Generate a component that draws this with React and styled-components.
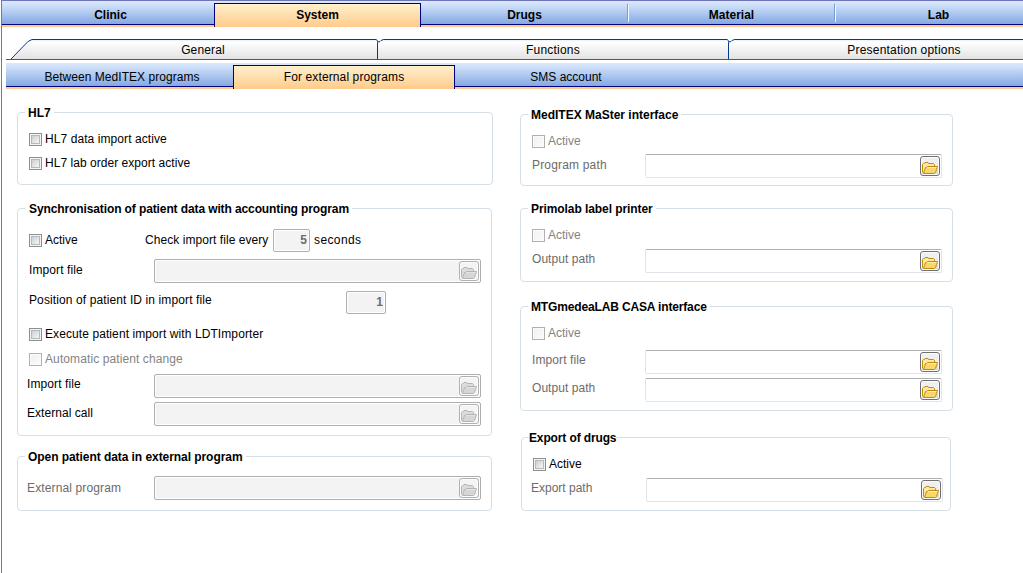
import styled, { createGlobalStyle, css } from 'styled-components';


const FolderIcon = ({disabled}) => {
    const line = disabled ? "#b4b4b4" : "#c08a10";
    const back = disabled ? "#dcdcdc" : "#fdeaa0";
    const front = disabled ? "#d6d6d6" : "#fbd669";

    return (
        <svg width="16" height="12" viewBox="0 0 16 12">
            <path d="M0.5 10.5V2.5L1.5 1.5H2.5L3 0.5H6L6.5 1.5H11.5L12.5 2.5V5" fill={back} stroke={line} />
            <path d="M1.5 11.5H12.5L13.5 10.5L14.5 7.5L15.5 4.5H5.5L4.5 5.5H3.5L2.5 8.5Z" fill={front} stroke={line} />
            <path d="M5 5.5H14.5" stroke={disabled ? "#e4e4e4" : "#fff0a8"} />
        </svg>
    );
};

const PathField = ({width, disabled}) => {
    return (
        <Field $width={width} $disabled={disabled}>
            <FolderButton $disabled={disabled}><FolderIcon disabled={disabled}/></FolderButton>
        </Field>
    );
};

const Check = ({label, disabled, spacing}) => {
    return (
        <CheckLabel $disabled={disabled}>
            <Box $disabled={disabled}/>
            <Text $spacing={spacing}>{label}</Text>
        </CheckLabel>
    );
};

const PageTabs = () => {
    return (
        <PageBar>
            <Slope width="26" height="21" viewBox="0 0 26 21">
                <defs>
                    <linearGradient id="slope" x1="0" y1="0" x2="0" y2="1">
                        <stop offset="0" stopColor="#ffffff"/>
                        <stop offset="1" stopColor="#e3e3e3"/>
                    </linearGradient>
                </defs>
                <path d="M5 20L22 2L26 1V20Z" fill="url(#slope)"/>
                <path d="M5 20L22 2.5L24 1.5L26 0.5" fill="none" stroke="#003c8c"/>
            </Slope>
            <PageTab $first>
                <Text $spacing={0.15}>General</Text>
            </PageTab>
            <PageTab>
                <Notch/>
                <Text $spacing={0.2}>Functions</Text>
            </PageTab>
            <PageTab>
                <Notch/>
                <Text $spacing={0.2}>Presentation options</Text>
            </PageTab>
        </PageBar>
    );
};

const Notch = () => {
    return (
        <Corner width="8" height="4" viewBox="0 0 8 4">
            <path d="M0 0H8L2 4Z" fill="#ffffff"/>
            <path d="M0.5 0.5L2 3L4 2.5L5 1.5L7.5 0.5" fill="none" stroke="#003c8c"/>
        </Corner>
    );
};

const App = () => {
    return (
        <Window>
            <GlobalStyle/>
            <TabBar $bold>
                <Tab $width={207}>Clinic</Tab>
                <Tab $width={207} $active>System</Tab>
                <Tab $width={207} $divider>Drugs</Tab>
                <Tab $width={207} $divider>Material</Tab>
                <Tab $width={207}>Lab</Tab>
            </TabBar>
            <PageTabs/>
            <TabBar $sub>
                <Tab $width={222}><Text $spacing={0.04}>Between MedITEX programs</Text></Tab>
                <Tab $width={222} $active><Text $spacing={0.12}>For external programs</Text></Tab>
                <Tab $width={222}>SMS account</Tab>
            </TabBar>

            <Columns>
                <Column $top={16} $width={476}>
                    <Group $height={80}>
                        <Legend>HL7</Legend>
                        <Row $top={13}><Check label="HL7 data import active" spacing={0.08}/></Row>
                        <Row $top={11}><Check label="HL7 lab order export active" spacing={0.04}/></Row>
                    </Group>

                    <Group $top={16} $height={235} $width={475}>
                        <Legend $spacing={-0.11} $shift={1}>Synchronisation of patient data with accounting program</Legend>
                        <Row $top={13} $height={23}>
                            <CheckSlot><Check label="Active"/></CheckSlot>
                            <Label $width={128} $lift={2} $spacing={0.06}>Check import file every</Label>
                            <NumberField $width={37}>5</NumberField>
                            <Unit>seconds</Unit>
                        </Row>
                        <Row $top={7} $height={24}>
                            <Label $width={125} $lift={2} $spacing={0.1}>Import file</Label>
                            <PathField width={327} disabled/>
                        </Row>
                        <Row $top={8} $height={23}>
                            <Label $width={317} $lift={5} $spacing={0.11}>Position of patient ID in import file</Label>
                            <NumberField $width={40}>1</NumberField>
                        </Row>
                        <Row $top={14}><Check label="Execute patient import with LDTImporter" spacing={0.09}/></Row>
                        <Row $top={12}><Check label="Automatic patient change" spacing={0.1} disabled/></Row>
                        <Row $top={8} $height={24} $outdent={2}>
                            <Label $width={127} $lift={4} $spacing={0.1}>Import file</Label>
                            <PathField width={327} disabled/>
                        </Row>
                        <Row $top={4} $height={24} $outdent={2}>
                            <Label $width={127} $lift={2} $spacing={0.04}>External call</Label>
                            <PathField width={327} disabled/>
                        </Row>
                    </Group>

                    <Group $top={13} $height={62} $width={475}>
                        <Legend $spacing={-0.06}>Open patient data in external program</Legend>
                        <Row $top={12} $height={24} $outdent={2}>
                            <Label $width={127} $spacing={0.13} $muted>External program</Label>
                            <PathField width={327} disabled/>
                        </Row>
                    </Group>
                </Column>

                <Column $top={18} $width={433}>
                    <Group $height={79}>
                        <Legend>MedITEX MaSter interface</Legend>
                        <Row $top={13}><Check label="Active" disabled/></Row>
                        <Row $top={6} $height={24}>
                            <Label $width={113} $lift={2} $spacing={0.17} $muted>Program path</Label>
                            <PathField width={297}/>
                        </Row>
                    </Group>

                    <Group $top={15} $height={81}>
                        <Legend $spacing={-0.08}>Primolab label printer</Legend>
                        <Row $top={13}><Check label="Active" disabled/></Row>
                        <Row $top={7} $height={24}>
                            <Label $width={113} $lift={4} $spacing={0.05} $muted>Output path</Label>
                            <PathField width={297}/>
                        </Row>
                    </Group>

                    <Group $top={17} $height={112}>
                        <Legend $spacing={-0.15}>MTGmedeaLAB CASA interface</Legend>
                        <Row $top={13}><Check label="Active" disabled/></Row>
                        <Row $top={10} $height={24}>
                            <Label $width={113} $lift={4} $spacing={0.1} $muted>Import file</Label>
                            <PathField width={297}/>
                        </Row>
                        <Row $top={4} $height={24}>
                            <Label $width={113} $lift={4} $spacing={0.05} $muted>Output path</Label>
                            <PathField width={297}/>
                        </Row>
                    </Group>

                    <Group $top={19} $height={81} $width={430} $indent={1}>
                        <Legend $spacing={-0.13} $tight>Export of drugs</Legend>
                        <Row $top={13}><Check label="Active"/></Row>
                        <Row $top={7} $height={24} $outdent={2}>
                            <Label $width={115} $lift={4} $muted>Export path</Label>
                            <PathField width={297}/>
                        </Row>
                    </Group>
                </Column>
            </Columns>
        </Window>
    );
};

const GlobalStyle = createGlobalStyle`
    * {
        box-sizing: border-box;
    }

    body {
        margin: 0;
        overflow: hidden;
        background-color: #ffffff;
        font-family: "Liberation Sans", Arial, Helvetica, sans-serif;
        font-size: 12px;
        color: #000000;
    }
`

const Window = styled.div`
    width: 1022px;
    height: 573px;
    margin-left: 1px;
    border-left: 1px solid #6f74b9;
    border-top: 1px solid #6f74b9;
    overflow: hidden;
`

const TabBar = styled.div`
    display: flex;
    height: 26px;
    padding-left: 5px;
    overflow: hidden;
    font-weight: ${({$bold}) => $bold ? "bold" : "normal"};
    background: linear-gradient(#dce9fc 0, #cfe0fa 4px, #83a9e2 23px, #000080 23px, #000080 24px, #ffcb8b 24px);
    ${({$sub}) => $sub && css`margin-left: 4px;`}
`

const Tab = styled.div`
    flex: 0 0 ${({$width}) => $width}px;
    height: 26px;
    line-height: 28px;
    text-align: center;

    ${({$active}) => $active && css`
        height: 24px;
        margin-top: 2px;
        line-height: 22px;
        border: 1px solid #000080;
        border-bottom: 0;
        background: linear-gradient(#fff0cd, #ffcb8b);
    `}

    ${({$divider}) => $divider && css`
        background: linear-gradient(#7b9bd3, #7b9bd3) 206px 3px / 1px 17px no-repeat;

        & + div {
            background-image: linear-gradient(#f4f8ff, #f4f8ff), linear-gradient(#7b9bd3, #7b9bd3);
            background-position: 0 4px, 206px 3px;
            background-size: 1px 17px, 1px 17px;
            background-repeat: no-repeat;
        }

        & + div:last-child {
            background-size: 1px 17px, 0 0;
        }
    `}
`

const PageBar = styled.div`
    display: flex;
    height: 21px;
    margin: 12px 0 3px 4px;
    overflow: hidden;
    background: linear-gradient(#2f5f9f, #2f5f9f) 0 20px / 100% 1px no-repeat;
`

const Slope = styled.svg`
    flex: none;
`

const PageTab = styled.div`
    position: relative;
    flex: 0 0 ${({$first}) => $first ? 345 : 351}px;
    height: 20px;
    padding-right: ${({$first}) => $first ? 3 : 0}px;
    line-height: 21px;
    text-align: center;
    border-top: 1px solid #003c8c;
    border-left: ${({$first}) => $first ? "0" : "1px solid #003c8c"};
    background: linear-gradient(#e3f2fd 0, #ffffff 2px, #e3e3e3 19px);
`

const Corner = styled.svg`
    position: absolute;
    top: -1px;
    left: -2px;
`

const Columns = styled.div`
    display: flex;
    gap: 27px;
    padding-left: 15px;
`

const Column = styled.div`
    display: flex;
    flex-direction: column;
    width: ${({$width}) => $width}px;
    padding-top: ${({$top}) => $top}px;
`

const Group = styled.fieldset`
    min-width: 0;
    width: ${({$width}) => $width ? $width + "px" : "100%"};
    height: ${({$height}) => $height}px;
    margin: ${({$top}) => $top || 0}px 0 0 ${({$indent}) => $indent || 0}px;
    padding: 0 0 0 11px;
    border: 1px solid #d5dfe5;
    border-radius: 4px;
`

const Legend = styled.legend`
    height: 15px;
    margin-left: -4px;
    padding: 0 ${({$tight}) => $tight ? 0 : 3}px;
    padding-left: ${({$tight, $shift}) => $tight ? 0 : 3 + ($shift || 0)}px;
    line-height: 17px;
    font-weight: bold;
    letter-spacing: ${({$spacing}) => $spacing || 0}px;
    white-space: nowrap;
`

const Row = styled.div`
    display: flex;
    align-items: center;
    height: ${({$height}) => $height || 13}px;
    margin-top: ${({$top}) => $top}px;
    margin-left: -${({$outdent}) => $outdent || 0}px;
`

const Label = styled.span`
    flex: 0 0 ${({$width}) => $width}px;
    padding-bottom: ${({$lift}) => $lift || 0}px;
    line-height: 14px;
    letter-spacing: ${({$spacing}) => $spacing || 0}px;
    white-space: nowrap;
    color: ${({$muted}) => $muted ? "#6b6b6b" : "#000000"};
`

const Text = styled.span`
    letter-spacing: ${({$spacing}) => $spacing || 0}px;
    white-space: nowrap;
`

const CheckLabel = styled.label`
    display: flex;
    align-items: center;
    gap: 3px;
    line-height: 13px;
    color: ${({$disabled}) => $disabled ? "#838383" : "#000000"};
`

const CheckSlot = styled.div`
    flex: 0 0 116px;
`

const Box = styled.span`
    width: 13px;
    height: 13px;
    padding: 2px;
    border: 1px solid ${({$disabled}) => $disabled ? "#b1b1b1" : "#8e8f8f"};
    background: ${({$disabled}) => $disabled
        ? "linear-gradient(135deg, #f0f0f0, #fbfbfb)"
        : "linear-gradient(135deg, #cbcfd5, #f6f6f6) content-box, #f4f4f4"};
    box-shadow: ${({$disabled}) => $disabled ? "inset 0 0 0 1px #fbfbfb" : "none"};
    ${({$disabled}) => !$disabled && css`
        outline: 1px solid #b4b9c0;
        outline-offset: -3px;
    `}
`

const Unit = styled.span`
    margin-left: 4px;
    padding-bottom: 2px;
    letter-spacing: 0.4px;
`

const NumberField = styled.div`
    width: ${({$width}) => $width}px;
    height: 23px;
    padding-right: 2px;
    border: 1px solid #afafaf;
    border-radius: 2px;
    box-shadow: inset 0 0 0 1px #ffffff;
    background-color: #f3f3f3;
    color: #6d6d6d;
    font-weight: bold;
    line-height: 21px;
    text-align: right;
`

const Field = styled.div`
    display: flex;
    align-items: center;
    justify-content: flex-end;
    width: ${({$width}) => $width}px;
    height: 24px;
    padding-right: 1px;
    border: 1px solid #e2e3ea;
    border-top-color: #abadb3;
    border-radius: 2px;
    background-color: #ffffff;

    ${({$disabled}) => $disabled && css`
        border-color: #afafaf;
        box-shadow: inset 0 0 0 1px #ffffff;
        background-color: #f3f3f3;
    `}
`

const FolderButton = styled.span`
    display: flex;
    width: 20px;
    height: 20px;
    padding: 5px 0 0 1px;
    border: 1px solid ${({$disabled}) => $disabled ? "#adb2b5" : "#707070"};
    border-radius: 3px;
    box-shadow: inset 0 0 0 1px #fcfcfc;
    background: ${({$disabled}) => $disabled ? "#f4f4f4" : "linear-gradient(#f2f2f2, #ebebeb 50%, #e2e2e2 50%, #d8d8d8)"};
`

export default App;
